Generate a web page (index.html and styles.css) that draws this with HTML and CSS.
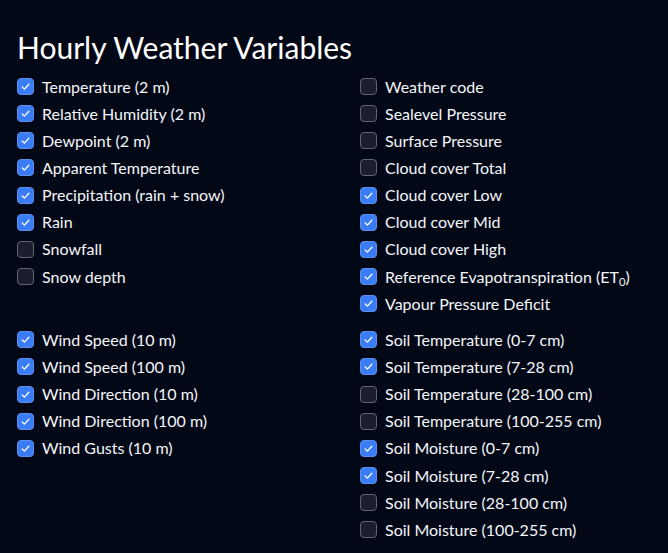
FILE: index.html
```html
<!DOCTYPE html>
<html lang="en">
<head>
<meta charset="utf-8">
<title>Hourly Weather Variables</title>
<link rel="stylesheet" href="styles.css">
</head>
<body>
<main class="page">
  <h2 class="title">Hourly Weather Variables</h2>
  <div class="grid">
    <div class="group">
      <label class="check"><span class="box on"><svg viewBox="0 0 20 20"><path d="M5.5 10.5l3 3l6-6.5"/></svg></span><span>Temperature (2 m)</span></label>
      <label class="check"><span class="box on"><svg viewBox="0 0 20 20"><path d="M5.5 10.5l3 3l6-6.5"/></svg></span><span>Relative Humidity (2 m)</span></label>
      <label class="check"><span class="box on"><svg viewBox="0 0 20 20"><path d="M5.5 10.5l3 3l6-6.5"/></svg></span><span>Dewpoint (2 m)</span></label>
      <label class="check"><span class="box on"><svg viewBox="0 0 20 20"><path d="M5.5 10.5l3 3l6-6.5"/></svg></span><span>Apparent Temperature</span></label>
      <label class="check"><span class="box on"><svg viewBox="0 0 20 20"><path d="M5.5 10.5l3 3l6-6.5"/></svg></span><span>Precipitation (rain + snow)</span></label>
      <label class="check"><span class="box on"><svg viewBox="0 0 20 20"><path d="M5.5 10.5l3 3l6-6.5"/></svg></span><span>Rain</span></label>
      <label class="check"><span class="box"></span><span>Snowfall</span></label>
      <label class="check"><span class="box"></span><span>Snow depth</span></label>
    </div>
    <div class="group">
      <label class="check"><span class="box"></span><span>Weather code</span></label>
      <label class="check"><span class="box"></span><span>Sealevel Pressure</span></label>
      <label class="check"><span class="box"></span><span>Surface Pressure</span></label>
      <label class="check"><span class="box"></span><span>Cloud cover Total</span></label>
      <label class="check"><span class="box on"><svg viewBox="0 0 20 20"><path d="M5.5 10.5l3 3l6-6.5"/></svg></span><span>Cloud cover Low</span></label>
      <label class="check"><span class="box on"><svg viewBox="0 0 20 20"><path d="M5.5 10.5l3 3l6-6.5"/></svg></span><span>Cloud cover Mid</span></label>
      <label class="check"><span class="box on"><svg viewBox="0 0 20 20"><path d="M5.5 10.5l3 3l6-6.5"/></svg></span><span>Cloud cover High</span></label>
      <label class="check"><span class="box on"><svg viewBox="0 0 20 20"><path d="M5.5 10.5l3 3l6-6.5"/></svg></span><span>Reference Evapotranspiration (ET<sub>0</sub>)</span></label>
      <label class="check"><span class="box on"><svg viewBox="0 0 20 20"><path d="M5.5 10.5l3 3l6-6.5"/></svg></span><span>Vapour Pressure Deficit</span></label>
    </div>
    <div class="group">
      <label class="check"><span class="box on"><svg viewBox="0 0 20 20"><path d="M5.5 10.5l3 3l6-6.5"/></svg></span><span>Wind Speed (10 m)</span></label>
      <label class="check"><span class="box on"><svg viewBox="0 0 20 20"><path d="M5.5 10.5l3 3l6-6.5"/></svg></span><span>Wind Speed (100 m)</span></label>
      <label class="check"><span class="box on"><svg viewBox="0 0 20 20"><path d="M5.5 10.5l3 3l6-6.5"/></svg></span><span>Wind Direction (10 m)</span></label>
      <label class="check"><span class="box on"><svg viewBox="0 0 20 20"><path d="M5.5 10.5l3 3l6-6.5"/></svg></span><span>Wind Direction (100 m)</span></label>
      <label class="check"><span class="box on"><svg viewBox="0 0 20 20"><path d="M5.5 10.5l3 3l6-6.5"/></svg></span><span>Wind Gusts (10 m)</span></label>
    </div>
    <div class="group">
      <label class="check"><span class="box on"><svg viewBox="0 0 20 20"><path d="M5.5 10.5l3 3l6-6.5"/></svg></span><span>Soil Temperature (0-7 cm)</span></label>
      <label class="check"><span class="box on"><svg viewBox="0 0 20 20"><path d="M5.5 10.5l3 3l6-6.5"/></svg></span><span>Soil Temperature (7-28 cm)</span></label>
      <label class="check"><span class="box"></span><span>Soil Temperature (28-100 cm)</span></label>
      <label class="check"><span class="box"></span><span>Soil Temperature (100-255 cm)</span></label>
      <label class="check"><span class="box on"><svg viewBox="0 0 20 20"><path d="M5.5 10.5l3 3l6-6.5"/></svg></span><span>Soil Moisture (0-7 cm)</span></label>
      <label class="check"><span class="box on"><svg viewBox="0 0 20 20"><path d="M5.5 10.5l3 3l6-6.5"/></svg></span><span>Soil Moisture (7-28 cm)</span></label>
      <label class="check"><span class="box"></span><span>Soil Moisture (28-100 cm)</span></label>
      <label class="check"><span class="box"></span><span>Soil Moisture (100-255 cm)</span></label>
    </div>
  </div>
</main>
</body>
</html>
```

FILE: styles.css
```css
html, body {
  margin: 0;
  background: #030816;
}
body {
  color: #f4f6fa;
  font-family: Lato, "Liberation Sans", sans-serif;
  font-size: 16px;
  line-height: 1.5;
}
.page {
  padding: 29px 17px 0 17px;
}
.title {
  margin: 0 0 8px 0;
  font-size: 30px;
  font-weight: 400;
  line-height: 1.2;
  color: #ffffff;
}
.grid {
  display: grid;
  grid-template-columns: 343px 1fr;
  row-gap: 9px;
}
.group {
  display: flex;
  flex-direction: column;
}
.check {
  display: flex;
  align-items: center;
  gap: 8px;
  height: 27.15px;
}
.box {
  box-sizing: border-box;
  width: 17px;
  height: 17px;
  flex: none;
  border: 1px solid #60656f;
  border-radius: 4px;
  background: #1b1f2d;
  display: flex;
  align-items: center;
  justify-content: center;
}
.box.on {
  background: #3a7cf6;
  border-color: #5c8ff0;
}
.box svg {
  width: 15px;
  height: 15px;
  fill: none;
  stroke: #ffffff;
  stroke-width: 1.8;
  stroke-linecap: round;
  stroke-linejoin: round;
}
sub {
  font-size: 0.7em;
  line-height: 0;
  vertical-align: -0.3em;
}
```
